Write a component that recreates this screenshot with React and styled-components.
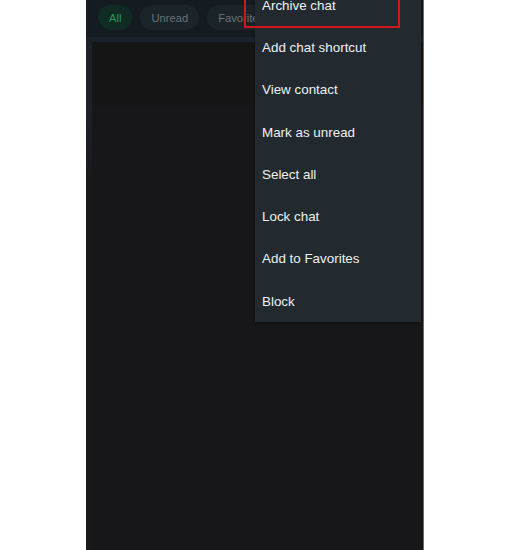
import React from 'react';
import styled, { createGlobalStyle } from 'styled-components';

const GlobalStyle = createGlobalStyle`
  html, body {
    margin: 0;
    padding: 0;
    background: #ffffff;
  }
  body {
    font-family: "Liberation Sans", Arial, Helvetica, sans-serif;
  }
`;

const Page = styled.div`
  width: 510px;
  height: 550px;
  overflow: hidden;
  display: flex;
  padding-left: 86px;
  box-sizing: border-box;
`;

const Panel = styled.div`
  position: relative;
  width: 338px;
  height: 550px;
  background: #171719;
  border-right: 1px solid #6a6a6a;
  box-sizing: border-box;
  display: flex;
  flex-direction: column;
`;

const Header = styled.div`
  height: 37px;
  background: #141c21;
  display: flex;
  align-items: center;
  gap: 8px;
  padding: 0 0 2px 12px;
  box-sizing: border-box;
  overflow: hidden;
`;

const Chip = styled.div`
  height: 25px;
  padding: 0 11px;
  border-radius: 13px;
  display: flex;
  align-items: center;
  font-size: 11.2px;
  white-space: nowrap;
  background: ${p => (p.$active ? '#0f2b24' : '#1b2429')};
  color: ${p => (p.$active ? '#21985f' : '#687277')};
`;

const Divider = styled.div`
  height: 5px;
  background: #19222a;
`;

const Body = styled.div`
  flex: 1;
  display: flex;
`;

const Strip = styled.div`
  width: 6px;
  background: linear-gradient(#1d2327 0, #1d2226 70px, #19191c 130px);
`;

const List = styled.div`
  flex: 1;
  display: flex;
  flex-direction: column;
`;

const SelectedRow = styled.div`
  height: 63px;
  background: #151516;
`;

const Menu = styled.div`
  position: absolute;
  top: -16px;
  left: 169px;
  width: 166px;
  background: #222a2f;
  box-shadow: 0 1px 3px rgba(0, 0, 0, 0.3);
  z-index: 2;
`;

const MenuItem = styled.div`
  height: 42.3px;
  display: flex;
  align-items: center;
  padding-left: 7px;
  font-size: 13.4px;
  color: #eef1f2;
  white-space: nowrap;
`;

const Highlight = styled.div`
  position: absolute;
  top: -12px;
  left: 158px;
  width: 156px;
  height: 40px;
  border: 2px solid #d3161e;
  box-sizing: border-box;
  pointer-events: none;
  z-index: 3;
`;

const filters = ['All', 'Unread', 'Favorites', 'Groups'];

const actions = [
  'Archive chat',
  'Add chat shortcut',
  'View contact',
  'Mark as unread',
  'Select all',
  'Lock chat',
  'Add to Favorites',
  'Block',
];

export default function App() {
  return (
    <>
      <GlobalStyle />
      <Page>
        <Panel>
          <Header>
            {filters.map((f, i) => (
              <Chip key={f} $active={i === 0}>{f}</Chip>
            ))}
          </Header>
          <Divider />
          <Body>
            <Strip />
            <List>
              <SelectedRow />
            </List>
          </Body>
          <Menu>
            {actions.map(a => (
              <MenuItem key={a}>{a}</MenuItem>
            ))}
          </Menu>
          <Highlight />
        </Panel>
      </Page>
    </>
  );
}
